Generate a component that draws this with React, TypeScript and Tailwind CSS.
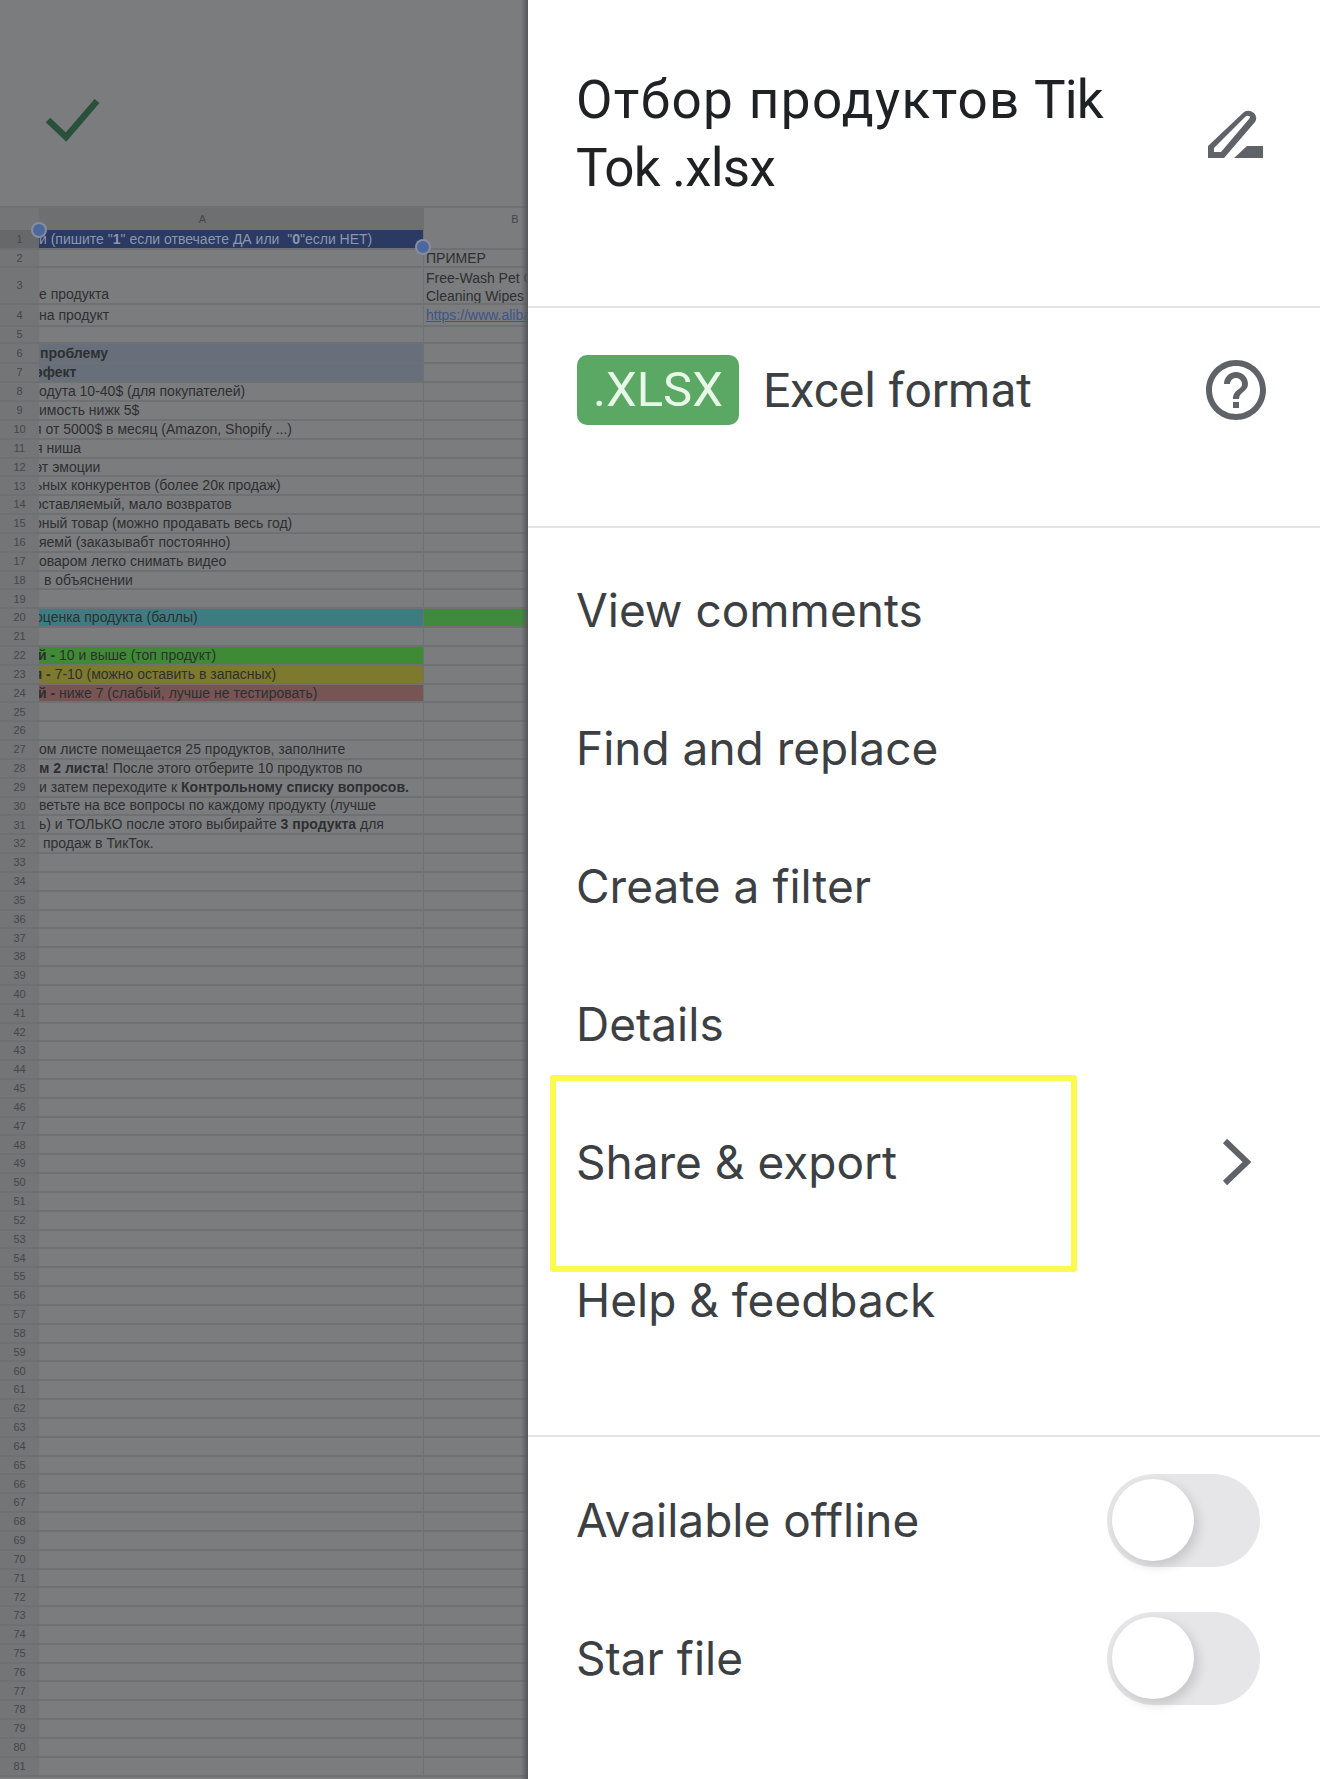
import type { ReactNode } from "react";
import { MdHelpOutline } from "react-icons/md";

interface IRow {
  n: number;
  h?: string;
  a?: ReactNode;
  b?: ReactNode;
  aBg?: string;
  bBg?: string;
  clip?: string;
}

const rows: IRow[] = [
  {
    n: 1,
    h: "h-[20px]",
    aBg: "bg-[#2a3a63]",
    a: (
      <span className="block pt-[1px] text-[#8d96ad]">
        и (пишите "<b>1</b>" если отвечаете ДА или &nbsp;"<b>0</b>"если НЕТ)
      </span>
    ),
  },
  { n: 2, h: "h-[18px]", b: "ПРИМЕР" },
  {
    n: 3,
    h: "h-[37px]",
    a: <span className="block pt-[18px]">е продукта</span>,
    b: (
      <span className="block pt-[4px] leading-[17.5px]">
        Free-Wash Pet Care
        <br />
        Cleaning Wipes
      </span>
    ),
  },
  {
    n: 4,
    h: "h-[22px]",
    a: "на продукт",
    b: <span className="text-[#3e5488] underline">https://www.alibaba.com</span>,
  },
  { n: 5, h: "h-[17px]" },
  { n: 6, h: "h-[20px]", aBg: "bg-[#67707a]", a: <b className="pl-[1px]">проблему</b> },
  { n: 7, h: "h-[19px]", aBg: "bg-[#67707a]", a: <b>эфект</b>, clip: "-ml-[4px]" },
  { n: 8, h: "h-[19px]", a: "одута 10-40$ (для покупателей)" },
  { n: 9, h: "h-[19px]", a: "имость нижк 5$" },
  { n: 10, a: "я от 5000$ в месяц (Amazon, Shopify ...)", clip: "-ml-[5px]" },
  { n: 11, a: "я ниша", clip: "-ml-[4px]" },
  { n: 12, a: "эт эмоции", clip: "-ml-[4px]" },
  { n: 13, a: "ьных конкурентов (более 20к продаж)", clip: "-ml-[4px]" },
  { n: 14, a: "оставляемый, мало возвратов", clip: "-ml-[5px]" },
  { n: 15, a: "оный товар (можно продавать весь год)", clip: "-ml-[5px]" },
  { n: 16, a: "яемй (заказывабт постоянно)" },
  { n: 17, a: "оваром легко снимать видео" },
  { n: 18, a: <span className="pl-[5px]">в объяснении</span> },
  { n: 19 },
  {
    n: 20,
    aBg: "bg-[#3d7d82]",
    bBg: "bg-[#3f8a3c]",
    a: "оценка продукта (баллы)",
    clip: "-ml-[4px]",
  },
  { n: 21 },
  {
    n: 22,
    aBg: "bg-[#3f8a34]",
    a: (
      <>
        <b>й - </b>10 и выше (топ продукт)
      </>
    ),
    clip: "-ml-[1px]",
  },
  {
    n: 23,
    aBg: "bg-[#7d7a30]",
    a: (
      <>
        <b>я - </b>7-10 (можно оставить в запасных)
      </>
    ),
    clip: "-ml-[5px]",
  },
  {
    n: 24,
    aBg: "bg-[#775555]",
    a: (
      <>
        <b>й - </b>ниже 7 (слабый, лучше не тестировать)
      </>
    ),
    clip: "-ml-[1px]",
  },
  { n: 25 },
  { n: 26 },
  { n: 27, a: "ом листе помещается 25 продуктов, заполните" },
  {
    n: 28,
    a: (
      <>
        <b>м 2 листа</b>! После этого отберите 10 продуктов по
      </>
    ),
  },
  {
    n: 29,
    a: (
      <>
        и затем переходите к <b>Контрольному списку вопросов.</b>
      </>
    ),
  },
  { n: 30, a: "ветьте на все вопросы по каждому продукту (лучше" },
  {
    n: 31,
    a: (
      <>
        ь) и ТОЛЬКО после этого выбирайте <b>3 продукта</b> для
      </>
    ),
  },
  { n: 32, a: <span className="pl-[4px]">продаж в ТикТок.</span> },
  ...Array.from({ length: 49 }, (_, i) => ({ n: i + 33 })),
];

function SheetRow({ n, h = "h-[18.84px]", a, b, aBg, bBg, clip }: IRow) {
  return (
    <div className={`flex shrink-0 ${h} border-b-2 border-[#6f7072]`}>
      <div
        className={`w-[39px] shrink-0 flex items-center justify-center text-[11px] text-[#454648] ${
          n === 1 ? "bg-[#67686a]" : "bg-[#747577]"
        }`}
      >
        {n}
      </div>
      <div
        className={`w-[385px] shrink-0 flex items-center overflow-hidden whitespace-nowrap border-r border-[#6f7072] ${
          aBg ?? ""
        }`}
      >
        <div className={clip}>{a}</div>
      </div>
      <div className={`flex-1 pl-[2px] flex items-center overflow-hidden whitespace-nowrap ${bBg ?? ""}`}>
        {b}
      </div>
    </div>
  );
}

function Sheet() {
  return (
    <div className="relative w-[528px] h-full shrink-0 overflow-hidden bg-[#7b7c7e] flex flex-col font-['Liberation_Sans',sans-serif] text-[14px] text-[#2e2f31]">
      <div className="h-[206px] shrink-0 pl-[45px] pt-[97px]">
        <svg width="56" height="46" viewBox="0 0 56 46" fill="none">
          <polyline points="3,23 21,40 52,4" stroke="#28503a" strokeWidth="6.5" />
        </svg>
      </div>
      <div className="flex h-[24px] shrink-0 border-t-2 border-[#6f7072] text-[11px] text-[#454648]">
        <div className="w-[39px] bg-[#747577]" />
        <div className="w-[385px] bg-[#6e6f71] flex items-center justify-center pr-[58px]">A</div>
        <div className="flex-1 flex items-center justify-center pl-[78px]">B</div>
      </div>
      {rows.map((r) => (
        <SheetRow key={r.n} {...r} />
      ))}
      {/* selection handles */}
      <div className="absolute left-[33px] top-[224px] w-[12px] h-[12px] rounded-full bg-[#4d689e] ring-2 ring-[#868d9e]" />
      <div className="absolute left-[417px] top-[241px] w-[12px] h-[12px] rounded-full bg-[#4d689e] ring-2 ring-[#868d9e]" />
      <div className="absolute right-0 top-0 bottom-0 w-[7px] bg-gradient-to-r from-transparent to-[#55565a]" />
    </div>
  );
}

function MenuRow({ label, right }: { label: string; right?: ReactNode }) {
  return (
    <div className="h-[138px] shrink-0 flex items-center justify-between pl-[48px]">
      <span>{label}</span>
      {right}
    </div>
  );
}

function Toggle() {
  return (
    <div className="w-[153px] h-[93px] mr-[60px] rounded-full bg-[#e6e6e8] flex items-center pl-[5px]">
      <div className="w-[82px] h-[82px] rounded-full bg-white shadow-[4px_5px_12px_rgba(0,0,0,0.14)]" />
    </div>
  );
}

export default function App() {
  return (
    <div className="flex w-[1320px] h-[1779px] overflow-hidden bg-white">
      <Sheet />
      <div className="relative flex-1 flex flex-col font-['Inter',sans-serif] text-[46px] text-[#3c4043]">
        <div className="h-[308px] shrink-0 border-b-2 border-[#e2e3e4] pt-[66px] pl-[48px] pr-[57px] flex items-start justify-between">
          <div className="font-['Roboto',sans-serif] text-[53px] leading-[68px] text-[#202124] w-[560px]">
            <span className="tracking-[1.4px]">Отбор продуктов</span>{" "}
            <span className="tracking-[-0.8px]">Tik Tok .xlsx</span>
          </div>
          <svg width="55" height="48" viewBox="0 0 55 48" className="mt-[44px] shrink-0" fill="#5f6368" fillRule="evenodd">
            <path d="M0 48V36L36 2Q41 -1 46 3Q50 7 47 12L16 48ZM6 42H13L41 9Q43 7 41 6Q39 5 37 7L6 38Z" />
            <path d="M26 48L39 36H55V48Z" />
          </svg>
        </div>
        <div className="h-[220px] shrink-0 border-b-2 border-[#e2e3e4] pt-[47px] pl-[49px] pr-[48px] flex items-start text-[48px]">
          <div className="w-[162px] h-[70px] rounded-[10px] bg-[#5aa863] text-[#e8f8e8] text-[49px] flex items-center justify-center font-['Roboto',sans-serif]">
            .XLSX
          </div>
          <span className="ml-[24px] h-[70px] pt-[1px] flex items-center font-['Roboto',sans-serif]">Excel format</span>
          <MdHelpOutline className="ml-auto -mt-[1px] text-[#5f6368]" size={72} />
        </div>
        <div className="pt-[13px]">
          <MenuRow label="View comments" />
          <MenuRow label="Find and replace" />
          <MenuRow label="Create a filter" />
          <MenuRow label="Details" />
          <MenuRow
            label="Share & export"
            right={
              <svg width="32" height="48" viewBox="0 0 32 48" className="mr-[67px]" fill="none">
                <polyline points="4,3 26,24 4,45" stroke="#5f6368" strokeWidth="6" />
              </svg>
            }
          />
          <MenuRow label="Help & feedback" />
        </div>
        <div className="mt-[66px] border-t-2 border-[#e2e3e4] pt-[14px]">
          <MenuRow label="Available offline" right={<Toggle />} />
          <MenuRow label="Star file" right={<Toggle />} />
        </div>
        {/* yellow callout */}
        <div className="absolute left-[22px] top-[1075px] w-[527px] h-[197px] border-[6px] border-[#fdf94f] rounded-[3px]" />
      </div>
    </div>
  );
}
